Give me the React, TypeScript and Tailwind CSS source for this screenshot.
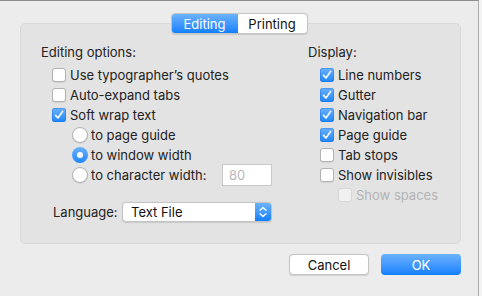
import React from "react";

const font = { fontFamily: "Inter, 'Liberation Sans', Arial, sans-serif" };

function Checkbox({ checked = false, disabled = false }: { checked?: boolean; disabled?: boolean }) {
  if (checked) {
    return (
      <span className="flex h-[14px] w-[14px] shrink-0 items-center justify-center rounded-[3px] bg-gradient-to-b from-[#69b1fa] to-[#1a86fc] shadow-[inset_0_0_0_0.5px_rgba(0,80,200,0.5)]">
        <svg viewBox="0 0 14 14" className="h-[14px] w-[14px]">
          <path d="M3.6 7.4 L6 10 L10.6 3.4" fill="none" stroke="white" strokeWidth="1.6" strokeLinecap="round" strokeLinejoin="round" />
        </svg>
      </span>
    );
  }
  return (
    <span
      className={`h-[14px] w-[14px] shrink-0 rounded-[3px] border ${
        disabled ? "border-[#d6d6d6] bg-[#f1f1f1]" : "border-[#b3b3b3] bg-white shadow-[0_0.5px_0.5px_rgba(0,0,0,0.15)]"
      }`}
    />
  );
}

function Radio({ checked = false }: { checked?: boolean }) {
  if (checked) {
    return (
      <span className="flex h-[16px] w-[16px] shrink-0 items-center justify-center rounded-full bg-gradient-to-b from-[#69b1fa] to-[#1a86fc]">
        <span className="h-[6px] w-[6px] rounded-full bg-white" />
      </span>
    );
  }
  return <span className="h-[16px] w-[16px] shrink-0 rounded-full border border-[#b3b3b3] bg-white shadow-[0_0.5px_0.5px_rgba(0,0,0,0.15)]" />;
}

function CheckRow({ label, checked, disabled }: { label: string; checked?: boolean; disabled?: boolean }) {
  return (
    <div className="flex h-5 items-center gap-[4px]">
      <Checkbox checked={checked} disabled={disabled} />
      <span className={disabled ? "text-[#b4b4b4]" : "text-[#222]"}>{label}</span>
    </div>
  );
}

function RadioRow({ label, checked, children }: { label: string; checked?: boolean; children?: React.ReactNode }) {
  return (
    <div className="flex h-5 items-center gap-[3px] pl-[31px]">
      <Radio checked={checked} />
      <span className="text-[#222]">{label}</span>
      {children}
    </div>
  );
}

export default function App() {
  return (
    <div className="flex h-[296px] w-[482px] overflow-hidden text-[13px] leading-4" style={font}>
      <div className="flex w-[479px] flex-col border-t border-r border-t-[#8c8c8c] border-r-[#a9a9a9] bg-[#ececec]">
        <div className="relative z-10 mt-[12px] flex justify-center">
          <div className="flex h-[21px] overflow-hidden rounded-[4px] border border-[#c6c6c6] bg-white shadow-[0_0.5px_1px_rgba(0,0,0,0.12)]">
            <div className="flex w-[66px] items-center justify-center bg-gradient-to-b from-[#6ab2fb] to-[#0d7ffe] text-white">Editing</div>
            <div className="flex w-[69px] items-center justify-center text-[#111]">Printing</div>
          </div>
        </div>

        <div className="ml-[20px] -mt-[11px] flex h-[221px] w-[441px] rounded-[5px] border border-[#d9d9d9] bg-[#e3e3e3] pt-[18px] pl-[20px]">
          <div className="flex w-[231px] flex-col">
            <div className="flex h-5 items-center text-[#222]">Editing options:</div>
            <div className="mt-[3px] flex flex-col pl-[11px]">
              <CheckRow label="Use typographer’s quotes" />
              <CheckRow label="Auto-expand tabs" />
              <CheckRow label="Soft wrap text" checked />
            </div>
            <RadioRow label="to page guide" />
            <RadioRow label="to window width" checked />
            <RadioRow label="to character width:">
              <div className="ml-auto flex h-[22px] w-[50px] items-center border border-[#c9c9c9] bg-white px-[6px] text-[#b9b9b9]">80</div>
            </RadioRow>
            <div className="mt-[17px] flex h-5 items-center pl-[12px]">
              <span className="text-[#222]">Language:</span>
              <div className="ml-auto flex h-[20px] w-[150px] overflow-hidden rounded-[4px] border border-[#c4c4c4] bg-white shadow-[0_0.5px_1px_rgba(0,0,0,0.12)]">
                <span className="flex flex-1 items-center pl-[8px] text-[#111]">Text File</span>
                <span className="flex w-[16px] items-center justify-center bg-gradient-to-b from-[#6ab2fb] to-[#0d7ffe]">
                  <svg viewBox="0 0 16 18" className="h-[18px] w-[16px]">
                    <path d="M5 7.2 L8 4.4 L11 7.2 M5 10.8 L8 13.6 L11 10.8" fill="none" stroke="white" strokeWidth="1.3" strokeLinecap="round" strokeLinejoin="round" />
                  </svg>
                </span>
              </div>
            </div>
          </div>

          <div className="ml-[36px] flex flex-col">
            <div className="flex h-5 items-center text-[#222]">Display:</div>
            <div className="mt-[3px] flex flex-col pl-[12px]">
              <CheckRow label="Line numbers" checked />
              <CheckRow label="Gutter" checked />
              <CheckRow label="Navigation bar" checked />
              <CheckRow label="Page guide" checked />
              <CheckRow label="Tab stops" />
              <CheckRow label="Show invisibles" />
              <div className="pl-[18px]">
                <CheckRow label="Show spaces" disabled />
              </div>
            </div>
          </div>
        </div>

        <div className="mt-[10px] flex justify-end gap-[12px] pr-[17px]">
          <button className="flex h-[21px] w-[80px] items-center justify-center rounded-[4px] border border-[#c4c4c4] bg-white text-[#111] shadow-[0_0.5px_1px_rgba(0,0,0,0.12)]">Cancel</button>
          <button className="flex h-[21px] w-[80px] items-center justify-center rounded-[4px] bg-gradient-to-b from-[#6ab2fb] to-[#0d7ffe] text-white">OK</button>
        </div>
      </div>
      <div className="w-[3px] bg-[#f3f3f3]" />
    </div>
  );
}
